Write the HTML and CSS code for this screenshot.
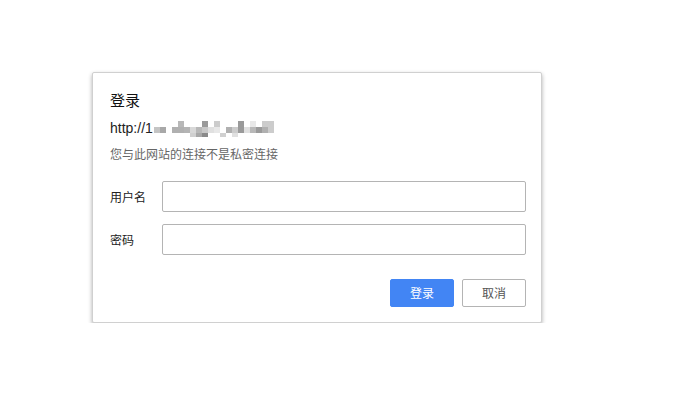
FILE: index.html
```html
<!DOCTYPE html>
<html lang="zh-CN">
<head>
<meta charset="utf-8">
<title>登录</title>
<link rel="stylesheet" href="styles.css">
</head>
<body>
<div class="dialog">
  <div class="title">登录</div>
  <div class="url">
    <span>http://1</span>
    <svg class="mosaic" width="120" height="16" viewBox="0 0 120 16">
      <rect x="0" y="6" width="6" height="6" fill="#c4c4c4"/>
      <rect x="6" y="6" width="6" height="6" fill="#a8a8a8"/>
      <rect x="18" y="6" width="6" height="6" fill="#b0b0b0"/>
      <rect x="24" y="0" width="6" height="6" fill="#b8b8b8"/>
      <rect x="24" y="6" width="6" height="6" fill="#b0b0b0"/>
      <rect x="30" y="6" width="6" height="6" fill="#b4b4b4"/>
      <rect x="36" y="6" width="6" height="6" fill="#d8d8d8"/>
      <rect x="36" y="12" width="6" height="4" fill="#d0d0d0"/>
      <rect x="42" y="6" width="6" height="6" fill="#b8b8b8"/>
      <rect x="42" y="12" width="6" height="4" fill="#a8a8a8"/>
      <rect x="48" y="0" width="6" height="6" fill="#9a9a9a"/>
      <rect x="48" y="6" width="6" height="6" fill="#c8c8c8"/>
      <rect x="48" y="12" width="6" height="4" fill="#8a8a8a"/>
      <rect x="54" y="6" width="6" height="6" fill="#e0e0e0"/>
      <rect x="60" y="0" width="6" height="6" fill="#cccccc"/>
      <rect x="60" y="6" width="6" height="6" fill="#e8e8e8"/>
      <rect x="66" y="12" width="6" height="4" fill="#d0d0d0"/>
      <rect x="72" y="6" width="6" height="6" fill="#b0b0b0"/>
      <rect x="78" y="6" width="6" height="6" fill="#cccccc"/>
      <rect x="78" y="12" width="6" height="4" fill="#e0e0e0"/>
      <rect x="84" y="0" width="6" height="6" fill="#9a9a9a"/>
      <rect x="84" y="6" width="6" height="6" fill="#9a9a9a"/>
      <rect x="90" y="6" width="6" height="6" fill="#e0e0e0"/>
      <rect x="96" y="0" width="6" height="6" fill="#e8e8e8"/>
      <rect x="96" y="6" width="6" height="6" fill="#b8b8b8"/>
      <rect x="102" y="6" width="6" height="6" fill="#9a9a9a"/>
      <rect x="108" y="0" width="6" height="6" fill="#cccccc"/>
      <rect x="108" y="6" width="6" height="6" fill="#b0b0b0"/>
      <rect x="114" y="0" width="6" height="6" fill="#cccccc"/>
      <rect x="114" y="6" width="6" height="6" fill="#cccccc"/>
    </svg>
  </div>
  <div class="note">您与此网站的连接不是私密连接</div>
  <div class="fields">
    <label class="row">
      <span class="label">用户名</span>
      <input class="input" type="text">
    </label>
    <label class="row">
      <span class="label">密码</span>
      <input class="input" type="password">
    </label>
  </div>
  <div class="actions">
    <button class="btn btn-primary" type="button">登录</button>
    <button class="btn btn-default" type="button">取消</button>
  </div>
</div>
</body>
</html>
```

FILE: styles.css
```css
html, body {
  margin: 0;
  padding: 0;
  background: #ffffff;
}

body {
  padding: 72px 0 0 92px;
  font-family: "Liberation Sans", "Noto Sans CJK SC", sans-serif;
  color: #222;
}

.dialog {
  box-sizing: border-box;
  width: 450px;
  height: 251px;
  background: #fff;
  border: 1px solid #d0d0d0;
  border-radius: 2px;
  box-shadow: 0 2px 4px rgba(0, 0, 0, 0.32);
  padding: 17px 15px 15px 17px;
  display: flex;
  flex-direction: column;
}

.title {
  font-family: "Noto Sans CJK SC", sans-serif;
  font-size: 15px;
  line-height: 20px;
  color: #111;
}

.url {
  margin-top: 9px;
  display: flex;
  align-items: flex-start;
  font-size: 14px;
  line-height: 18px;
  height: 18px;
  color: #222;
}

.mosaic {
  display: block;
  margin-top: 2px;
  margin-left: 1px;
}

.note {
  margin-top: 8px;
  font-family: "Noto Sans CJK SC", sans-serif;
  font-size: 12px;
  line-height: 18px;
  color: #666;
}

.fields {
  margin-top: 18px;
  display: flex;
  flex-direction: column;
  gap: 12px;
}

.row {
  display: flex;
  align-items: center;
}

.label {
  width: 52px;
  flex: none;
  font-family: "Noto Sans CJK SC", sans-serif;
  font-size: 12px;
  color: #222;
}

.input {
  flex: 1;
  box-sizing: border-box;
  height: 31px;
  margin: 0;
  border: 1px solid #b4b4b4;
  border-radius: 2px;
  background: #fff;
  outline: none;
  padding: 0 6px;
}

.actions {
  margin-top: 24px;
  display: flex;
  justify-content: flex-end;
  gap: 8px;
}

.btn {
  box-sizing: border-box;
  width: 64px;
  height: 28px;
  margin: 0;
  border-radius: 2px;
  font-family: "Noto Sans CJK SC", sans-serif;
  font-size: 12px;
  line-height: 26px;
  padding: 0;
  cursor: pointer;
}

.btn-primary {
  background: #4285f4;
  border: 1px solid #4285f4;
  color: #fff;
}

.btn-default {
  background: #fff;
  border: 1px solid #b4b4b4;
  color: #555;
}
```
